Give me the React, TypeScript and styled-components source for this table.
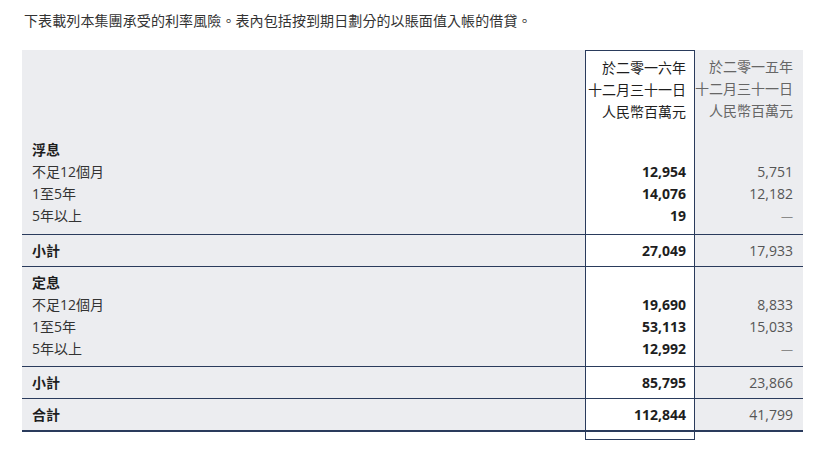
import styled, { createGlobalStyle } from "styled-components";

const GlobalStyle = createGlobalStyle`
  html, body {
    margin: 0;
    padding: 0;
    background: #ffffff;
  }
  body {
    font-family: "Open Sans", "Noto Sans CJK TC", sans-serif;
    font-size: 14px;
    color: #333333;
  }
`;

const NAVY = "#2a3b5c";
const GREY_BG = "#ecedf0";

const Page = styled.div`
  padding: 10px 0 0 22px;
  width: 781px;
`;

const Intro = styled.p`
  margin: 0 0 18px 2px;
  line-height: 22px;
  color: #333333;
  white-space: nowrap;
  letter-spacing: 0.1px;
`;

const Table = styled.table`
  width: 781px;
  table-layout: fixed;
  border-collapse: separate;
  border-spacing: 0;
`;

type Kind = "label" | "cur" | "prev";
type Edge = "none" | "top" | "grand";

interface CellProps {
  $kind: Kind;
  $bold?: boolean;
  $padTop?: number;
  $padBottom?: number;
  $edge?: Edge;
}

const Cell = styled.td<CellProps>`
  box-sizing: border-box;
  padding: ${(p) => p.$padTop ?? 0}px ${(p) => (p.$kind === "label" ? 0 : p.$kind === "cur" ? 8 : 10)}px
    ${(p) => p.$padBottom ?? 0}px ${(p) => (p.$kind === "label" ? 10 : 0)}px;
  line-height: 22px;
  vertical-align: top;
  white-space: nowrap;
  text-align: ${(p) => (p.$kind === "label" ? "left" : "right")};
  background: ${(p) => (p.$kind === "cur" ? "#ffffff" : GREY_BG)};
  color: ${(p) => (p.$kind === "prev" ? "#555555" : p.$bold ? "#1e1e1e" : "#333333")};
  font-weight: ${(p) => (p.$bold ? 700 : 400)};
  border-left: ${(p) => (p.$kind === "cur" ? `1px solid ${NAVY}` : "none")};
  border-right: ${(p) => (p.$kind === "cur" ? `1px solid ${NAVY}` : "none")};
  border-top: ${(p) => (p.$edge === "top" || p.$edge === "grand" ? `1px solid ${NAVY}` : "none")};
  border-bottom: ${(p) => (p.$edge === "grand" ? `2px solid ${NAVY}` : "none")};
`;

const HeadCell = styled(Cell)`
  padding-top: 6px;
  padding-bottom: 16px;
  font-weight: 400;
  color: ${(p) => (p.$kind === "prev" ? "#666666" : "#1e1e1e")};
  border-top: ${(p) => (p.$kind === "cur" ? `1px solid ${NAVY}` : "none")};
`;

const Tail = styled.td<{ $cur?: boolean }>`
  height: 7px;
  padding: 0;
  background: #ffffff;
  border-left: ${(p) => (p.$cur ? `1px solid ${NAVY}` : "none")};
  border-right: ${(p) => (p.$cur ? `1px solid ${NAVY}` : "none")};
  border-bottom: ${(p) => (p.$cur ? `1px solid ${NAVY}` : "none")};
`;

const Dash = styled.span`
  font-size: 12px;
  color: #8a8a8a;
`;

type Line = {
  label: string;
  cur?: string;
  prev?: string;
  heading?: boolean;
  total?: boolean;
  padTop?: number;
  padBottom?: number;
  edge?: Edge;
};

const lines: Line[] = [
  { label: "浮息", heading: true },
  { label: "不足12個月", cur: "12,954", prev: "5,751" },
  { label: "1至5年", cur: "14,076", prev: "12,182" },
  { label: "5年以上", cur: "19", prev: "—", padBottom: 6 },
  { label: "小計", cur: "27,049", prev: "17,933", total: true, padTop: 4.5, padBottom: 4.5, edge: "top" },
  { label: "定息", heading: true, padTop: 5, edge: "top" },
  { label: "不足12個月", cur: "19,690", prev: "8,833" },
  { label: "1至5年", cur: "53,113", prev: "15,033" },
  { label: "5年以上", cur: "12,992", prev: "—", padBottom: 5 },
  { label: "小計", cur: "85,795", prev: "23,866", total: true, padTop: 4.5, padBottom: 4.5, edge: "top" },
  { label: "合計", cur: "112,844", prev: "41,799", total: true, padTop: 4.5, padBottom: 4.5, edge: "grand" },
];

const App = () => {
  return (
    <Page>
      <GlobalStyle />
      <Intro>下表載列本集團承受的利率風險。表內包括按到期日劃分的以賬面值入帳的借貸。</Intro>
      <Table>
        <colgroup>
          <col style={{ width: 563 }} />
          <col style={{ width: 110 }} />
          <col style={{ width: 108 }} />
        </colgroup>
        <tbody>
          <tr>
            <HeadCell $kind="label" />
            <HeadCell $kind="cur">
              於二零一六年
              <br />
              十二月三十一日
              <br />
              人民幣百萬元
            </HeadCell>
            <HeadCell $kind="prev">
              於二零一五年
              <br />
              十二月三十一日
              <br />
              人民幣百萬元
            </HeadCell>
          </tr>
          {lines.map((l, i) => (
            <tr key={i}>
              <Cell $kind="label" $bold={l.heading || l.total} $padTop={l.padTop} $padBottom={l.padBottom} $edge={l.edge}>
                {l.label}
              </Cell>
              <Cell $kind="cur" $bold $padTop={l.padTop} $padBottom={l.padBottom} $edge={l.edge}>
                {l.cur ?? ""}
              </Cell>
              <Cell $kind="prev" $padTop={l.padTop} $padBottom={l.padBottom} $edge={l.edge}>
                {l.prev === "—" ? <Dash>—</Dash> : l.prev ?? ""}
              </Cell>
            </tr>
          ))}
          <tr>
            <Tail />
            <Tail $cur />
            <Tail />
          </tr>
        </tbody>
      </Table>
    </Page>
  );
};

export default App;
